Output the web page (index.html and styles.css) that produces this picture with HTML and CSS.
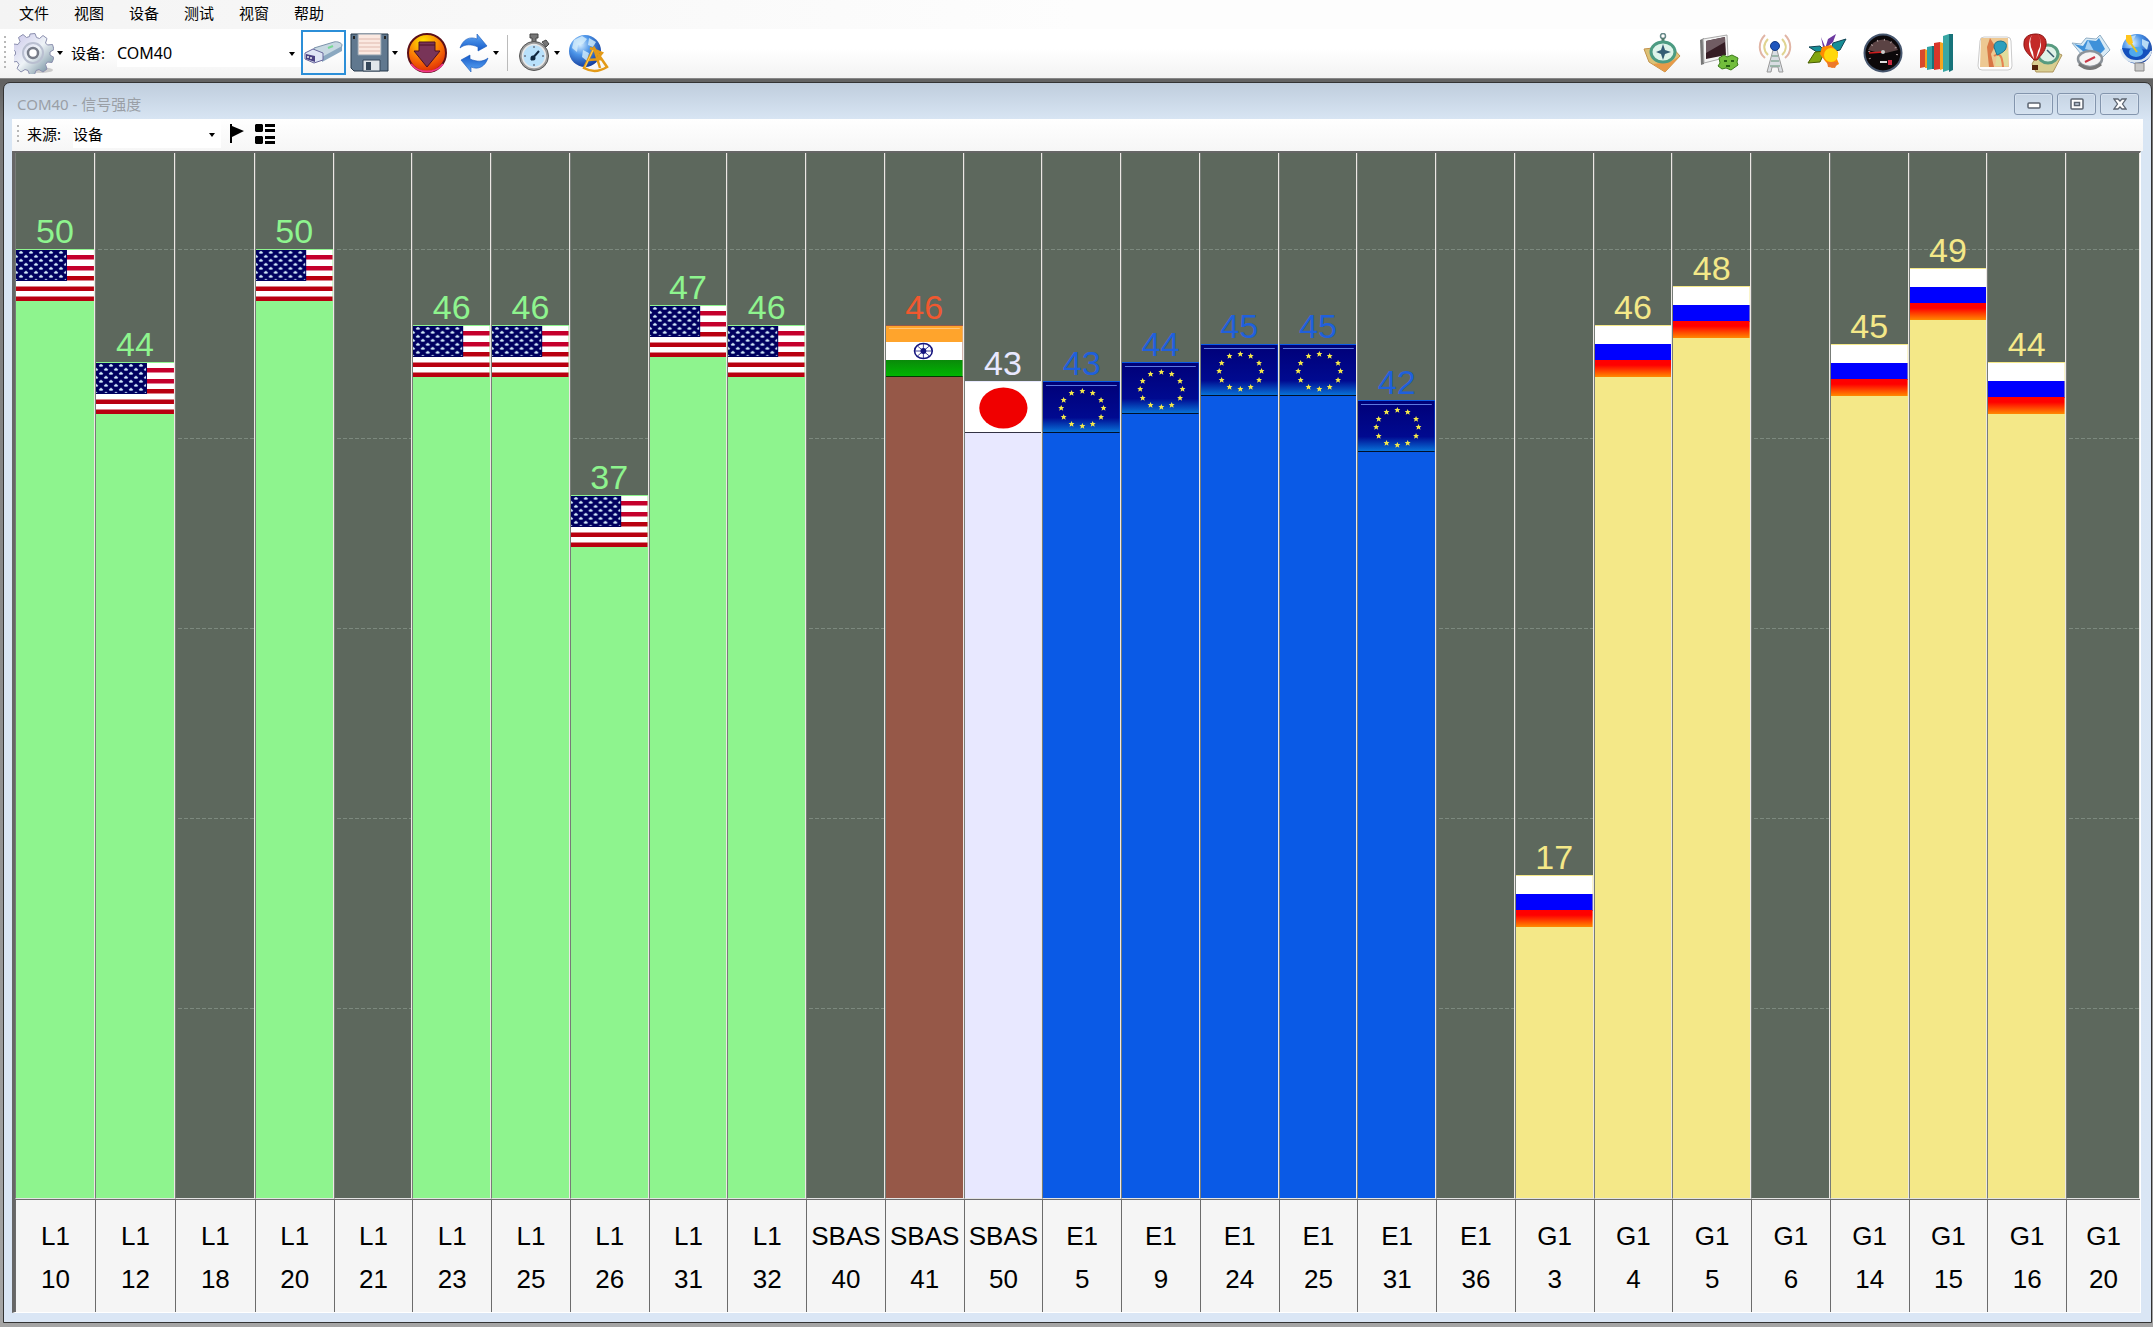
FILE: index.html
```html
<!DOCTYPE html>
<html lang="zh-CN">
<head>
  <meta charset="UTF-8">
  <meta name="viewport" content="width=device-width, initial-scale=1.0">
  <title>COM40 - 信号强度</title>
  <link rel="stylesheet" href="styles.css">
</head>
<body>
  <!-- Shared gradients and flags -->
  <svg class="defs" aria-hidden="true">
    <defs>
      <linearGradient id="steel" x1="0" y1="0" x2="1" y2="1"><stop offset="0" stop-color="#c9c4ea"/><stop offset=".5" stop-color="#eef3f7"/><stop offset="1" stop-color="#5f7f90"/></linearGradient>
      <linearGradient id="blue" x1="0" y1="0" x2="0" y2="1"><stop offset="0" stop-color="#5fa8f5"/><stop offset="1" stop-color="#1459c8"/></linearGradient>
      <radialGradient id="globe" cx=".35" cy=".3" r=".8"><stop offset="0" stop-color="#d8efff"/><stop offset=".4" stop-color="#4b94e8"/><stop offset="1" stop-color="#0b2f90"/></radialGradient>
      <radialGradient id="fire" cx=".4" cy=".2" r=".9"><stop offset="0" stop-color="#ffe500"/><stop offset=".5" stop-color="#fb7a05"/><stop offset="1" stop-color="#d81808"/></radialGradient>
      <linearGradient id="euBlue" x1="0" y1="0" x2="0" y2="1"><stop offset="0" stop-color="#000078"/><stop offset=".7" stop-color="#000a90"/><stop offset="1" stop-color="#0878dc"/></linearGradient>
      <linearGradient id="ruRed" x1="0" y1="0" x2="0" y2="1"><stop offset=".3" stop-color="#ff0000"/><stop offset="1" stop-color="#ff8a00"/></linearGradient>
      <linearGradient id="inGreen" x1="0" y1="0" x2="0" y2="1"><stop offset="0" stop-color="#0a8a0a"/><stop offset="1" stop-color="#00b800"/></linearGradient>
      <pattern id="stars" width="10" height="8" patternUnits="userSpaceOnUse">
        <path d="M5 .5l1 1.2 1.4.2-1 1 .2 1.200L5 3.500l-1.600.6.2-1.200-1-1 1.400-.2zM0 4.500l1 1.200 1.400.2-1 1 .2 1.100L0 7.500zM10 4.500l-1 1.200-1.400.2 1 1-.2 1.100L10 7.500z" fill="#cfe8f8"/>
      </pattern>
      <path id="star" d="M0-3l.9 2H3L1.400.5 2 2.800 0 1.500-2 2.800-1.400.5-3-1h2.100z" fill="#f4e84a"/>
      <symbol id="flag-us" viewBox="0 0 78 51" preserveAspectRatio="none">
        <path fill="#fff" d="M0 0h78v51H0z"/>
        <path fill="#c4002c" d="M50 5h28v4.500H50zM50 16h28v4.500H50z"/>
        <path fill="#b80010" d="M50 26h28v4.500H50zM0 36.500h78V41H0zM0 46.500h78V51H0z"/>
        <path fill="#00005f" d="M0 0h51v31H0z"/>
        <path fill="url(#stars)" d="M0 1h50v29H0z"/>
      </symbol>
      <symbol id="flag-in" viewBox="0 0 78 51" preserveAspectRatio="none">
        <path fill="#fff" d="M0 0h78v51H0z"/>
        <path fill="#ffa42c" d="M0 0h78v16H0z"/><path fill="#ffc67a" d="M3 2h72v1H3z"/>
        <path fill="url(#inGreen)" d="M0 34h78v17H0z"/><path fill="#063806" d="M0 50h78v1H0z"/>
        <ellipse cx="38" cy="25" rx="9" ry="7.500" fill="none" stroke="#15157e" stroke-width="1.600"/>
        <path d="M38 18v14M29 25h18M32 20l12 10M44 20L32 30" stroke="#15157e" stroke-width=".8"/>
        <circle cx="38" cy="25" r="3" fill="#15157e"/>
      </symbol>
      <symbol id="flag-jp" viewBox="0 0 78 51" preserveAspectRatio="none">
        <path fill="#fff" d="M0 0h78v51H0z"/><path fill="#334" d="M0 50h78v1H0z"/>
        <ellipse cx="39" cy="26" rx="24.500" ry="20.500" fill="#f00000"/>
      </symbol>
      <symbol id="flag-eu" viewBox="0 0 78 51" preserveAspectRatio="none">
        <path fill="url(#euBlue)" d="M0 0h78v51H0z"/>
        <path fill="#5c78e0" d="M3 3h72v1H3z"/><path fill="#001028" d="M0 50h78v1H0z"/>
        <use href="#star" x="40" y="9"/><use href="#star" x="50.500" y="11"/><use href="#star" x="59" y="18"/>
        <use href="#star" x="61.500" y="26"/><use href="#star" x="59" y="35"/><use href="#star" x="50.500" y="42"/>
        <use href="#star" x="40" y="44"/><use href="#star" x="29" y="42"/><use href="#star" x="21" y="35"/>
        <use href="#star" x="18.500" y="26"/><use href="#star" x="21" y="18"/><use href="#star" x="29" y="11"/>
      </symbol>
      <symbol id="flag-ru" viewBox="0 0 78 51" preserveAspectRatio="none">
        <path fill="#fff" d="M0 0h78v18H0z"/><path fill="#0000ff" d="M0 18h78v17H0z"/><path fill="url(#ruRed)" d="M0 34h78v17H0z"/>
      </symbol>
    </defs>
  </svg>

  <!-- Main menu -->
  <nav class="menu">
    <button>文件</button>
    <button>视图</button>
    <button>设备</button>
    <button>测试</button>
    <button>视窗</button>
    <button>帮助</button>
  </nav>

  <!-- Main toolbar -->
  <div class="toolbar">
    <span class="grip"></span>
    <button class="tool" aria-label="设置">
      <svg width="40" height="42" viewBox="0 0 40 42">
        <ellipse cx="26" cy="38" rx="13" ry="3" fill="#ccc"/>
        <path fill="url(#steel)" stroke="#8b8fae" stroke-width="1" d="M16 2l5-.5 1.500 4 3 1 3.500-3 4 3-1.500 4.500 2 2 5-.5 1.500 5-4 2.500v3l4 2.500-2 5-4.500-.5-2 2.500 1.500 4.500-4 3-4-2.500-3 1-1.500 4h-5l-1.500-4-3-1-4 2.500-4-3.500 2-4-2-3-4.500.5-1-5 4-2.500v-3l-4-3 2-4.500 4.500.5 2-3-1.500-4 4.500-3 3.500 3 3-1z"/>
        <circle cx="19" cy="21" r="10" fill="none" stroke="#b9bfd0" stroke-width="2"/>
        <circle cx="19" cy="21" r="5" fill="#fff" stroke="#777c88" stroke-width="2.500"/>
      </svg>
      <span class="caret"></span>
    </button>
    <label for="device">设备:</label>
    <span class="combo device">
      <select id="device"><option>COM40</option></select>
      <span class="caret"></span>
    </span>
    <button class="tool active" aria-label="连接">
      <svg width="40" height="26" viewBox="0 0 40 26">
        <path fill="#c7d8e2" stroke="#7c93ab" d="M10 8L30 2c3-1 8 1 8 3l-1 4-19 9-9-2z"/>
        <path fill="#8ba8c0" d="M18 17L38 6v5L18 22z"/>
        <path fill="#dfe5f5" stroke="#68679c" d="M1 13l8-4 10 4v7l-9 3-9-4z"/>
        <path fill="#4b4284" d="M2 14l9 2v6l-9-3z"/><path stroke="#eee" stroke-width="1.500" d="M4 16v2M7 17v2"/>
        <path stroke="#79d895" stroke-width="2" d="M24 8l5-2"/>
      </svg>
    </button>
    <button class="tool" aria-label="保存">
      <svg width="39" height="40" viewBox="0 0 39 40">
        <path fill="#60788f" stroke="#27394b" d="M1 1h37v37H4l-3-3z"/>
        <path fill="#fbe9e1" stroke="#8f9fad" d="M8 1h23v21H8z"/>
        <path stroke="#dfb9ae" d="M9 6h21M9 10h21M9 14h21M9 18h21"/>
        <path fill="#e0e6ea" stroke="#34475a" d="M13 27h17v11H13z"/><path fill="#34475a" d="M16 29h5v8h-5z"/>
        <path fill="#222" d="M3 3h2v3H3zM34 3h2v3h-2z"/>
      </svg>
      <span class="caret"></span>
    </button>
    <button class="tool" aria-label="停止">
      <svg width="42" height="42" viewBox="0 0 42 42">
        <circle cx="21" cy="21" r="19" fill="url(#fire)" stroke="#5c1018" stroke-width="2"/>
        <path d="M5 32c8 10 24 10 32 0" fill="none" stroke="#f0388a" stroke-width="2"/>
        <path fill="#783458" stroke="#4b1024" d="M13 10h16v9h5L21 35 8 19h5z"/><path stroke="#4b1024" d="M13 13h16"/>
      </svg>
    </button>
    <button class="tool refresh" aria-label="刷新">
      <svg width="32" height="40" viewBox="0 0 32 40">
        <path id="turn" fill="url(#blue)" stroke="#1858b8" stroke-width=".6" d="M2 15C5 6 12 3 19 6V1l10 12-9 5v-4c-7-3-13-3-18 1z"/>
        <use href="#turn" transform="rotate(180 16 20)"/>
      </svg>
      <span class="caret"></span>
    </button>
    <span class="divider"></span>
    <button class="tool" aria-label="计时">
      <svg width="33" height="40" viewBox="0 0 33 40">
        <path fill="#777" stroke="#444" d="M12 1h8v4h-2v4h-4V5h-2zM24 9l4-2 3 4-3 3z"/>
        <circle cx="16" cy="23" r="14.500" fill="#9a9a9a" stroke="#555"/>
        <circle cx="16" cy="23" r="11.500" fill="#b9e1fb" stroke="#e8e8e8" stroke-width="1.500"/>
        <path stroke="#445" stroke-dasharray="2 16" d="M16 13v20M6 23h20"/>
        <path stroke="#102840" stroke-width="2" d="M13 27l8-9"/><circle cx="15" cy="25" r="2.500" fill="#102840"/>
      </svg>
      <span class="caret"></span>
    </button>
    <button class="tool" aria-label="导航">
      <svg width="41" height="40" viewBox="0 0 41 40">
        <circle cx="17" cy="18" r="16" fill="url(#globe)"/>
        <path fill="#d4edfb" opacity=".8" d="M6 7l8-4 5 3-4 5-5 1-1 7-5-4zM21 5l7 4-3 5-5-2zM15 17l6 3-2 8-5-4z"/>
        <g fill="none" stroke="#e39a18" stroke-width="2.500"><path d="M26 15L16 35c7 4 15 4 23-1zM26 15l6 20M20 27l14-1M22 15l12 5-4 5"/></g>
        <path stroke="#ffd25a" d="M25 17l-8 17"/>
      </svg>
    </button>

    <div class="views">
      <button class="tool" aria-label="罗盘">
        <svg width="40" height="40" viewBox="0 0 40 40">
          <path fill="#dcc176" stroke="#c2924c" d="M1 16l5 13 16 10 15-16-9-10z"/><path fill="#e89a48" d="M10 31l12 8 15-16-10 6z"/>
          <circle cx="20" cy="3" r="2.500" fill="none" stroke="#688" stroke-width="1.500"/><path stroke="#557a6c" stroke-width="3" d="M20 5v5"/>
          <ellipse cx="20" cy="19" rx="12" ry="10" fill="#dff4ea" stroke="#4c9b82" stroke-width="3"/>
          <path fill="#345c74" d="M20 11l2 6 6 2-6 2-2 6-2-6-5-2 5-2z"/>
        </svg>
      </button>
      <button class="tool" aria-label="数据包控制台">
        <svg width="40" height="40" viewBox="0 0 40 40">
          <path fill="#777" d="M1 7l4-2v26l-3 1z"/><path fill="#f4f4f4" stroke="#aaa" d="M4 6l24-4 1 22L5 30z"/><path fill="#351c24" d="M7 8l19-4 1 18L7 26z"/><path fill="#705c63" d="M7 8l19-4v5L7 20z"/>
          <path fill="#72bd3c" stroke="#3d7c1c" d="M20 25l5-3 3 2 5-2 6 3-1 4 1 3-7 5-5-2-4 1-4-3 2-3z"/><path stroke="#255f12" stroke-width="2" d="M25 28h3M32 28h3M27 33h4"/>
        </svg>
      </button>
      <button class="tool" aria-label="天线">
        <svg width="40" height="40" viewBox="0 0 40 40">
          <g fill="none" stroke-width="2"><path stroke="#e1b5a5" d="M10 2C3 9 3 19 10 25M30 2c7 7 7 17 0 23"/><path stroke="#e0d490" d="M13 6c-5 5-5 11 0 16M27 6c5 5 5 11 0 16"/></g>
          <path fill="#d9dde2" stroke="#999" d="M18 17h4l6 22h-4l-1-5h-6l-1 5h-4z"/><path stroke="#8a9" stroke-width="1.500" d="M17 23h6M16 28h8M15 33h10"/>
          <circle cx="20" cy="13" r="4.500" fill="#1d55bd" stroke="#123a86"/>
        </svg>
      </button>
      <button class="tool" aria-label="卫星图">
        <svg width="40" height="40" viewBox="0 0 40 40">
          <path fill="#168e96" stroke="#145" d="M39 6L26 10l-3 9 10-2zM2 14l11-1 6 6-6 2z"/><path fill="#6c38a0" d="M29 1l-8 5-3 10 8-7zM14 4l5 12-3-2z"/>
          <path fill="#82a510" stroke="#465c00" d="M1 30L8 19l10-1-5 11z"/><path fill="#ff8c00" d="M15 14l9-2 7 7-1 7 2 5-7 4-7-7-5-7z"/><circle cx="24" cy="22" r="7" fill="#ffd80c"/><path fill="#ec792b" d="M20 29l11 0-3 6-7-1z"/>
        </svg>
      </button>
      <button class="tool" aria-label="速度表">
        <svg width="40" height="40" viewBox="0 0 40 40">
          <circle cx="20" cy="20" r="18.500" fill="#0c080a" stroke="#46566e" stroke-width="2"/>
          <path fill="#5b4344" d="M5 17a16 16 0 0 1 30 0l-12 3h-7z"/><path fill="none" stroke="#a99" stroke-width="2" stroke-dasharray="1 6" d="M7 26a14 14 0 1 1 26 0"/>
          <path stroke="#d01c1c" stroke-width="1.500" d="M6 20l14-1"/><circle cx="20" cy="19" r="2" fill="#ccc"/><path fill="#ddd" d="M17 28h7v2h-7z"/><path fill="#c82840" d="M25 27h4v5h-4z"/>
        </svg>
      </button>
      <button class="tool" aria-label="信号强度">
        <svg width="36" height="40" viewBox="0 0 36 40">
          <path fill="#d8492c" d="M1 17l5-1v18l-5 1z"/><path fill="#f0a020" d="M6 16l2 1v18H6z"/><path fill="#31a4a5" d="M8 14l5-1v23l-5 1z"/><path fill="#17737a" d="M13 13h2v23h-2z"/><path fill="#d8372a" d="M15 10l6-1v27l-6 1z"/><path fill="#f4a51f" d="M21 9l3 1v26l-3 1z"/><path fill="#39a7a4" d="M24 3l6-2v36l-6 2z"/><path fill="#17737a" d="M30 1h4v36l-4 2z"/>
        </svg>
      </button>
      <button class="tool map" aria-label="地图">
        <svg width="36" height="40" viewBox="0 0 36 40">
          <path fill="#fff" stroke="#ccc" d="M3 8q0-4 4-4h23q4 0 4 4l1 25q0 4-4 4H5q-4 0-4-4z"/>
          <path fill="#edc892" d="M4 5h27l1 29H3z"/><path fill="#d87645" d="M13 5l5 8-4 8 3 13h-5l-2-20z"/><path fill="#e0dc9c" d="M20 22l11-5v16H18z"/><path fill="none" stroke="#e7824f" stroke-width="2" d="M17 23q8-6 9 11"/>
          <path fill="#2c9fbe" stroke="#1a748e" d="M20 22l-3-8q0-6 7-6 7 1 5 7-1 4-9 7z"/>
        </svg>
      </button>
      <button class="tool" aria-label="航行">
        <svg width="40" height="40" viewBox="0 0 40 40">
          <path fill="#d9ce91" stroke="#ae955c" d="M9 31l10-18 20 9-9 17H13z"/><ellipse cx="25" cy="21" rx="10" ry="9" fill="#dff1e8" stroke="#589b80" stroke-width="3"/>
          <path fill="#c32a28" stroke="#8b1111" d="M13 1c7 0 11 5 10 11-1 7-5 10-9 15h-3C7 22 0 18 1 10 1 4 6 1 13 1z"/><path fill="#fff" d="M9 2q-7 9 2 24l-1-7Q5 9 9 2zM15 2q7 9-2 24l2-8Q20 9 15 2z"/><path fill="#54240b" d="M9 32h6v5H9z"/><path stroke="#35576a" stroke-width="1.500" d="M24 17l7 7"/>
        </svg>
      </button>
      <button class="tool" aria-label="航向">
        <svg width="40" height="40" viewBox="0 0 40 40">
          <path fill="#d9ebf6" stroke="#90aec5" d="M1 10l9 1 5-6 10 1 4-4 10 15-9 9-20-5z"/><path fill="#3f91d9" d="M3 11l9 2 4-6 9 1 3-3 6 11-7 7-14-4z"/><path fill="#a4d0f4" d="M17 7l6 11-9-2z"/>
          <ellipse cx="19" cy="26" rx="12" ry="8" fill="#f4f4f4" stroke="#8c939a" stroke-width="2.500"/><path fill="none" stroke="#777" stroke-width="3" d="M8 31q11 9 22 0"/><path stroke="#ca3846" stroke-width="2" d="M14 29l10-5"/>
        </svg>
      </button>
      <button class="tool" aria-label="卫星接收">
        <svg width="34" height="40" viewBox="0 0 34 40">
          <circle cx="18" cy="16" r="15" fill="url(#globe)"/><path fill="#b7dbf5" d="M10 4l7-2-3 6zM23 6l7 3-2 8-5-5z"/>
          <path fill="#d8e5f0" d="M1 16l32 2q-2 11-17 12Q3 29 1 16z"/><path fill="#1350bd" d="M3 15l29 2q-6 11-15 10Q6 27 3 15z"/><ellipse cx="17" cy="19" rx="7" ry="5" fill="#4fa9ec"/><path stroke="#e6c326" stroke-width="2" d="M10 8l8 11"/><path fill="#ffc51f" d="M7 2h5l2 8-4 2-3-4z"/>
          <path fill="#c8c8c8" stroke="#888" d="M16 30h9v8h-9z"/>
        </svg>
      </button>
    </div>
  </div>

  <!-- MDI area with the signal window -->
  <main class="workspace">
    <section class="window">
      <header class="titlebar">
        <h1>COM40 - 信号强度</h1>
        <button class="winbtn" aria-label="最小化"><svg width="14" height="12" viewBox="0 0 14 12"><rect x="1" y="5" width="12" height="5" rx="1" fill="#fff" stroke="#5c6470" stroke-width="1.500"/></svg></button>
        <button class="winbtn" aria-label="最大化"><svg width="14" height="12" viewBox="0 0 14 12"><rect x="1" y="1" width="12" height="10" rx="1" fill="#fff" stroke="#5c6470" stroke-width="1.500"/><rect x="4.500" y="4.500" width="5" height="3" fill="#c8d5e4" stroke="#5c6470" stroke-width="1.500"/></svg></button>
        <button class="winbtn" aria-label="关闭"><svg width="14" height="12" viewBox="0 0 14 12"><path fill="#fff" stroke="#5c6470" stroke-width="1.300" d="M1 1h4l2 2 2-2h4L9.500 6l3.500 5H9L7 9l-2 2H1l3.500-5z"/></svg></button>
      </header>
      <div class="source-bar">
        <span class="grip small"></span>
        <label for="source">来源:</label>
        <span class="combo source">
          <select id="source"><option>设备</option></select>
          <span class="caret"></span>
        </span>
        <button class="tool" aria-label="旗帜"><svg width="16" height="20" viewBox="0 0 16 20"><path d="M1 0h2v2l12 5-12 6v6H1z"/></svg></button>
        <button class="tool" aria-label="列表"><svg width="21" height="20" viewBox="0 0 21 20"><path d="M1 0h6l1 1v6l-1 1H1L0 7V1zM1 12h6l1 1v6l-1 1H1l-1-1v-6zM10 0h10v3H10zM10 5h10v3H10zM10 12h10v3H10zM10 17h10v3H10z"/></svg></button>
      </div>
      <div id="chart" class="chart"></div>
    </section>
  </main>
  <script src="script.js"></script>
</body>
</html>
```

FILE: styles.css
```css
* {
  box-sizing: border-box;
}

html,
body {
  height: 100%;
}

body {
  margin: 0;
  display: flex;
  flex-direction: column;
  overflow: hidden;
  background: #a5a5a5;
  color: #000;
  font-family: "Noto Sans", "Noto Sans CJK SC", sans-serif;
  font-size: 15px;
  line-height: 20px;
}

button,
select {
  margin: 0;
  padding: 0;
  border: 0;
  background: none;
  color: inherit;
  font: inherit;
}

svg {
  display: block;
}

.defs {
  position: absolute;
  width: 0;
  height: 0;
}

/* Menu */
.menu {
  flex: none;
  display: flex;
  gap: 25px;
  height: 29px;
  padding: 0 19px 3px;
  background: linear-gradient(to right, #f4f4f4, #fdfdfd 50%);
}

/* Toolbar */
.toolbar {
  flex: none;
  display: flex;
  align-items: center;
  height: 49px;
  padding: 0 0 2px 4px;
  background: linear-gradient(#fff 40%, #f3f3f3);
}

.grip {
  flex: none;
  width: 2px;
  height: 34px;
  margin-right: 8px;
  background: repeating-linear-gradient(#b8b8b8 0 2px, transparent 2px 5px);
}

.grip.small {
  height: 18px;
}

.tool {
  flex: none;
  display: flex;
  align-items: center;
  gap: 2px;
}

.caret {
  width: 0;
  border: 3px solid transparent;
  border-top: 4px solid #000;
  border-bottom: 0;
}

.toolbar > .tool {
  margin-right: 8px;
}

.toolbar > .tool .caret {
  margin-left: 1px;
}

.combo {
  position: relative;
  background: #fff;
}

.combo select {
  width: 100%;
  height: 28px;
  appearance: none;
  outline: none;
}

.combo .caret {
  position: absolute;
  right: 6px;
  top: 13px;
  pointer-events: none;
}

.device {
  width: 184px;
  margin-left: 12px;
  font-size: 16px;
}

.toolbar > .active {
  width: 45px;
  height: 45px;
  margin-right: 4px;
  justify-content: center;
  border: 2px solid #2c8fd8;
}

.toolbar > .refresh {
  margin-left: 2px;
}

.divider {
  width: 1px;
  height: 36px;
  margin-right: 10px;
  background: #bbb;
}

.views {
  flex: none;
  display: flex;
  align-items: center;
  gap: 16px;
  margin-left: auto;
}

.views .tool:nth-child(4),
.views .tool:nth-child(8) {
  margin-left: -4px;
}

.views .tool:nth-child(n+9) {
  margin-left: -8px;
}

.views .map {
  margin: 0 -2px 0 6px;
}

/* Child window */
.workspace {
  flex: 1;
  min-height: 0;
  display: flex;
  padding: 3px 1px 4px 3px;
  border-top: 1px solid #888;
  background: linear-gradient(#626262 4px, #777 40px, #a5a5a5);
}

.window {
  flex: 1;
  min-width: 0;
  display: flex;
  flex-direction: column;
  padding: 0 8px 9px;
  border: 1px solid #333;
  border-radius: 7px 7px 0 0;
  background: linear-gradient(#bfcddd, #d9e6f4 38px, #dae6f5);
}

.titlebar {
  flex: none;
  display: flex;
  align-items: center;
  gap: 4px;
  height: 36px;
  padding: 6px 4px 0 5px;
}

.titlebar h1 {
  flex: 1;
  margin: 0;
  color: #9a9fa6;
  font-size: 15px;
  font-weight: normal;
}

.winbtn {
  width: 39px;
  height: 22px;
  display: flex;
  align-items: center;
  justify-content: center;
  border: 1px solid #8395ad;
  border-radius: 3px;
  box-shadow: inset 0 0 0 1px #d7e2ef;
}

.source-bar {
  flex: none;
  display: flex;
  align-items: center;
  height: 32px;
  padding: 0 0 2px 5px;
  background: linear-gradient(#fff, #f6f6f6);
}

.source {
  width: 148px;
  margin: 0 8px 0 12px;
}

.source-bar .tool {
  margin-right: 10px;
}

/* Bar chart */
.chart {
  flex: 1;
  min-height: 0;
  display: grid;
  grid-template-columns: repeat(3, 400fr) repeat(23, 394fr) 370fr;
  grid-template-rows: minmax(0, 1fr) 113px;
  margin-right: 2px;
  border: 1px solid #fff;
  border-left: 3px solid #666;
  border-top: 2px solid #666;
  background: #f5f5f5;
  font-family: "Liberation Sans", Arial, sans-serif;
}

.plot {
  display: flex;
  flex-direction: column;
  justify-content: flex-end;
  min-width: 0;
  border-left: 1px solid #777c77;
  border-right: 1px solid #ece8e4;
  border-bottom: 1px solid #e4e4e4;
  background:
    repeating-linear-gradient(to right, #5d685d 0 2px, transparent 2px 6px),
    repeating-linear-gradient(to top, transparent 0 calc(18.17% - 1px), #7c897e calc(18.17% - 1px) 18.17%),
    #5d685d;
}

.value {
  font-size: 34px;
  line-height: 36px;
  text-align: center;
}

.bar {
  flex: none;
  padding-top: 1px;
}

.bar svg {
  width: 100%;
  height: 51px;
}

.gps { color: #8ef48e; }
.gagan { color: #f0582f; }
.qzss { color: #e8e8ff; }
.galileo { color: #2060dc; }
.glonass { color: #f4e888; }

.gps .bar { background: #8ef48e; }
.gagan .bar { background: #965848; }
.qzss .bar { background: #e8e8ff; }
.galileo .bar { background: #0a5ae6; }
.glonass .bar { background: #f4e888; }

.caption {
  display: flex;
  flex-direction: column;
  align-items: center;
  padding-top: 15px;
  border-left: 1px solid #6c6c6c;
  border-top: 1px solid #6c6c6c;
  font-size: 26px;
  line-height: 43px;
}
```

FILE: script.js
```js
const chart = document.getElementById('chart');
const maxLevel = 55.03;

// signal, satellite, level (0 = not received), system, flag
const channels = [
  ['L1', 10, 50, 'gps', 'us'],
  ['L1', 12, 44, 'gps', 'us'],
  ['L1', 18, 0],
  ['L1', 20, 50, 'gps', 'us'],
  ['L1', 21, 0],
  ['L1', 23, 46, 'gps', 'us'],
  ['L1', 25, 46, 'gps', 'us'],
  ['L1', 26, 37, 'gps', 'us'],
  ['L1', 31, 47, 'gps', 'us'],
  ['L1', 32, 46, 'gps', 'us'],
  ['SBAS', 40, 0],
  ['SBAS', 41, 46, 'gagan', 'in'],
  ['SBAS', 50, 43, 'qzss', 'jp'],
  ['E1', 5, 43, 'galileo', 'eu'],
  ['E1', 9, 44, 'galileo', 'eu'],
  ['E1', 24, 45, 'galileo', 'eu'],
  ['E1', 25, 45, 'galileo', 'eu'],
  ['E1', 31, 42, 'galileo', 'eu'],
  ['E1', 36, 0],
  ['G1', 3, 17, 'glonass', 'ru'],
  ['G1', 4, 46, 'glonass', 'ru'],
  ['G1', 5, 48, 'glonass', 'ru'],
  ['G1', 6, 0],
  ['G1', 14, 45, 'glonass', 'ru'],
  ['G1', 15, 49, 'glonass', 'ru'],
  ['G1', 16, 44, 'glonass', 'ru'],
  ['G1', 20, 0]
];

let plots = '';
let captions = '';
channels.forEach(([signal, sat, level, system, flag]) => {
  if (level > 0) {
    plots += `<div class="plot ${system}">
      <div class="value">${level}</div>
      <div class="bar" style="height: ${(level / maxLevel * 100).toFixed(2)}%"><svg><use href="#flag-${flag}"/></svg></div>
    </div>`;
  } else {
    plots += '<div class="plot"></div>';
  }
  captions += `<div class="caption"><span>${signal}</span><span>${sat}</span></div>`;
});
chart.innerHTML = plots + captions;
```
